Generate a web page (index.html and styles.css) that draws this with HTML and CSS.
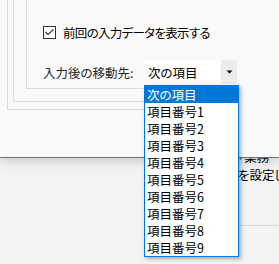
FILE: index.html
```html
<!DOCTYPE html>
<html lang="ja">
    <head>
        <meta charset="utf-8">
        <title>入力設定</title>
        <link rel="stylesheet" href="styles.css">
    </head>
    <body>
        <div class="screen">
            <div class="dialog">
                <div class="group outer">
                    <div class="group middle">
                        <div class="group inner">
                            <label class="check-row">
                                <span class="checkbox">
                                    <svg width="13" height="13" viewBox="0 0 13 13">
                                        <rect x="0.5" y="0.5" width="12" height="12" fill="#fff" stroke="#333"/>
                                        <path d="M2.5 6 L5 8.5 L10.5 3.5" fill="none" stroke="#333" stroke-width="1.1"/>
                                    </svg>
                                </span>
                                <span class="check-text">前回の入力データを表示する</span>
                            </label>
                            <div class="combo-row">
                                <span class="combo-label">入力後の移動先:</span>
                                <div class="combo">
                                    <span class="combo-value">次の項目</span>
                                    <span class="combo-button">
                                        <svg width="7" height="4" viewBox="0 0 7 4"><path d="M0.5 0.5 H6.5 L3.5 3.5 Z" fill="#000"/></svg>
                                    </span>
                                    <ul class="combo-list">
                                        <li class="selected">次の項目</li>
                                        <li>項目番号1</li>
                                        <li>項目番号2</li>
                                        <li>項目番号3</li>
                                        <li>項目番号4</li>
                                        <li>項目番号5</li>
                                        <li>項目番号6</li>
                                        <li>項目番号7</li>
                                        <li>項目番号8</li>
                                        <li>項目番号9</li>
                                    </ul>
                                </div>
                            </div>
                        </div>
                    </div>
                </div>
            </div>
            <div class="behind">
                <p>「業務</p>
                <p>を設定し</p>
                <div class="behind-rule"></div>
            </div>
        </div>
    </body>
</html>
```

FILE: styles.css
```css
:root {
    --dialog-bg: #f9f9f9;
    --desk-bg: #f3f3f3;
    --group-line: #dcdcdc;
    --select-blue: #0078d7;
    --text-color: #000;
    --label-color: #262626;
}

body {
    margin: 0;
    background-color: var(--desk-bg);
    font-family: "Noto Sans CJK JP", "Noto Sans", sans-serif;
    font-size: 12.5px;
    font-feature-settings: "palt";
    color: var(--text-color);
}

.screen {
    width: 279px;
    height: 264px;
    overflow: hidden;
}

.dialog {
    position: relative;
    z-index: 1;
    height: 157px;
    padding: 0 42px 0 7px;
    background-color: var(--dialog-bg);
    border-bottom: 1px solid #6f6f6f;
    box-shadow: 0 2px 12px rgba(0, 0, 0, 0.2);
}

.group {
    border-left: 1px solid var(--group-line);
    border-bottom: 1px solid var(--group-line);
}

.outer {
    padding: 0 0 7px 5px;
}

.middle {
    padding: 0 0 12px 12px;
}

.inner {
    padding: 26px 0 4px 16px;
}

.check-row {
    display: flex;
    align-items: center;
    height: 13px;
    gap: 7px;
    white-space: nowrap;
}

.checkbox {
    display: flex;
}

.check-text {
    letter-spacing: -0.7px;
}

.combo-row {
    display: flex;
    align-items: center;
    height: 24px;
    margin-top: 21px;
    white-space: nowrap;
}

.combo-label {
    width: 101px;
    color: var(--label-color);
}

.combo {
    position: relative;
    display: flex;
    align-items: center;
    width: 93px;
    height: 24px;
    background-color: white;
}

.combo-value {
    flex: 1;
    padding-left: 4px;
}

.combo-button {
    display: flex;
    align-items: center;
    justify-content: center;
    width: 16px;
    height: 24px;
    background-color: #ececec;
}

.combo-list {
    position: absolute;
    z-index: 2;
    top: 25px;
    left: 0;
    width: 95px;
    margin: 0;
    padding: 0;
    list-style: none;
    box-sizing: border-box;
    background-color: white;
    border: 1px solid var(--select-blue);
    box-shadow: 2px 2px 4px rgba(0, 0, 0, 0.3);
}

.combo-list li {
    height: 17px;
    line-height: 17px;
    padding-left: 2px;
}

.combo-list .selected {
    background-color: var(--select-blue);
    color: white;
}

.behind {
    margin-top: -10px;
    padding-left: 238px;
    white-space: nowrap;
}

.behind p {
    margin: 0;
    line-height: 18px;
}

.behind-rule {
    margin-top: 41px;
    border-top: 1px solid #d9d9d9;
}
```
